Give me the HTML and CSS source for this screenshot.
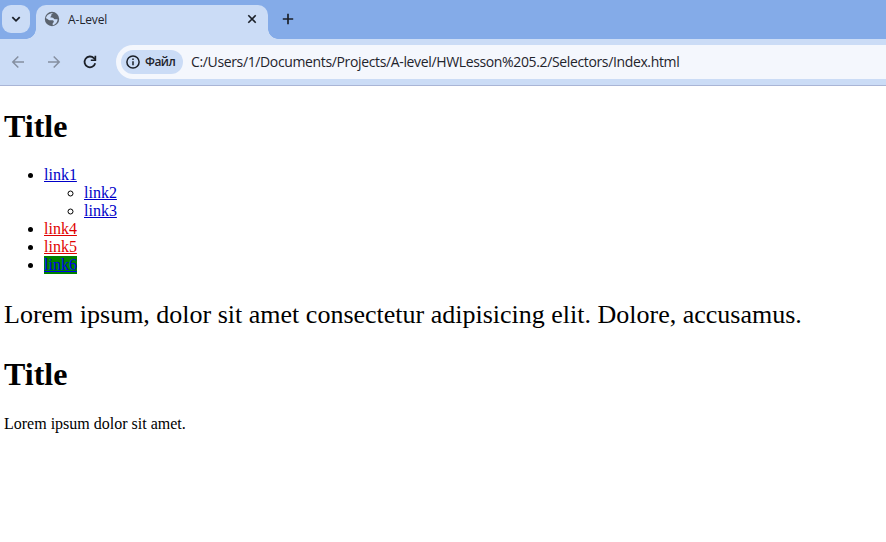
FILE: index.html
```html
<!DOCTYPE html>
<html lang="en">
<head>
<meta charset="utf-8">
<title>A-Level</title>
<link rel="stylesheet" href="styles.css">
</head>
<body>
<header class="browser">
  <div class="tabstrip">
    <div class="tab-search">
      <svg width="12" height="12" viewBox="0 0 12 12"><path d="M2.3 4.2 6 7.8 9.7 4.2" fill="none" stroke="#1b2028" stroke-width="1.8"/></svg>
    </div>
    <div class="tab">
      <svg class="globe" width="16" height="16" viewBox="0 0 16 16"><circle cx="8" cy="8" r="7.2" fill="#5b636e"/><path d="M9.4 2.2C7.6 3 7.1 3.4 7.3 4.4c.2.8-.9.8-.9 1.7 0 .8 1.3.5 2.3.7 1.2.3.9 1.5 2 1.5h2.9c0 3-2.2 5.4-4.9 5.9v-1.7c0-1 1.1-.8 1.1-1.8 0-1.2-.8-1.5-2-1.5H5.6C4.3 9.2 3.5 7.5 2 7.2 2.3 4.4 5.2 1.8 9.4 2.2Z" fill="#cbdcf6"/></svg>
      <span class="tab-title">A-Level</span>
      <svg class="close" width="10" height="10" viewBox="0 0 10 10"><path d="m1.3 1.3 7.4 7.4m0-7.4L1.3 8.7" stroke="#1b2028" stroke-width="1.6"/></svg>
    </div>
    <svg class="new-tab" width="12" height="12" viewBox="0 0 12 12"><path d="M6 .8v10.4M.8 6h10.4" stroke="#1b2028" stroke-width="1.7"/></svg>
  </div>
  <div class="toolbar">
    <svg class="nav" width="14" height="14" viewBox="0 0 14 14"><path d="M13 7H2m5.3-5.5L1.8 7l5.5 5.5" fill="none" stroke="#858fa0" stroke-width="1.5"/></svg>
    <svg class="nav" width="14" height="14" viewBox="0 0 14 14"><path d="M1 7h11M6.7 1.5 12.2 7l-5.5 5.5" fill="none" stroke="#858fa0" stroke-width="1.5"/></svg>
    <svg class="nav" width="14" height="14" viewBox="0 0 14 14"><path d="M12.2 8.2A5.4 5.4 0 1 1 10.9 3.2L12 4.4" fill="none" stroke="#1b2028" stroke-width="1.8"/><path d="M13.2.7v5.4H7.8V4.4h3.7V.7Z" fill="#1b2028"/></svg>
    <div class="omnibox">
      <div class="chip">
        <svg width="14" height="14" viewBox="0 0 14 14"><circle cx="7" cy="7" r="6.1" fill="none" stroke="#1b2028" stroke-width="1.5"/><path d="M7 6.2v4.1M7 3.6v1.5" stroke="#1b2028" stroke-width="1.5"/></svg>
        <span class="chip-label">Файл</span>
      </div>
      <span class="url">C:/Users/1/Documents/Projects/A-level/HWLesson%205.2/Selectors/Index.html</span>
    </div>
  </div>
</header>
<main>
  <h1>Title</h1>
  <ul>
    <li><a href="#">link1</a>
      <ul>
        <li><a href="#">link2</a></li>
        <li><a href="#">link3</a></li>
      </ul>
    </li>
    <li><a class="red" href="#">link4</a></li>
    <li><a class="red" href="#">link5</a></li>
    <li><a class="green" href="#">link6</a></li>
  </ul>
  <p class="lead">Lorem ipsum, dolor sit amet consectetur adipisicing elit. Dolore, accusamus.</p>
  <h1>Title</h1>
  <p>Lorem ipsum dolor sit amet.</p>
</main>
</body>
</html>
```
FILE: styles.css
```css
body {
  margin: 0;
  background: #fff;
  color: #000;
  font-family: "Liberation Serif", serif;
  font-size: 16px;
  overflow: hidden;
}
svg { display: block; flex: none; }
.browser {
  height: 85px;
  border-bottom: 1px solid #a9b5d6;
  background: #cbdcf6;
  font-family: "Open Sans", "Noto Sans", sans-serif;
  color: #1f242c;
}
.tabstrip {
  display: flex;
  align-items: flex-start;
  box-sizing: border-box;
  height: 39px;
  padding: 5px 0 0 2px;
  background: #84abe8;
}
.tab-search {
  display: flex;
  align-items: center;
  justify-content: center;
  width: 28px;
  height: 28px;
  border-radius: 9px;
  background: #cbdcf6;
}
.tab {
  position: relative;
  display: flex;
  align-items: center;
  box-sizing: border-box;
  width: 232px;
  height: 34px;
  margin-left: 6px;
  padding: 0 11px 6px 8px;
  border-radius: 10px 10px 0 0;
  background: #cbdcf6;
}
.tab::before, .tab::after {
  content: "";
  position: absolute;
  bottom: 0;
  width: 10px;
  height: 10px;
}
.tab::before {
  left: -10px;
  background: radial-gradient(circle at 0 0, transparent 9.5px, #cbdcf6 10px);
}
.tab::after {
  right: -10px;
  background: radial-gradient(circle at 100% 0, transparent 9.5px, #cbdcf6 10px);
}
.tab-title {
  flex: 1;
  margin-left: 8px;
  padding-top: 1px;
  font-size: 12px;
  line-height: 16px;
  letter-spacing: -0.15px;
}
.new-tab { margin: 8px 0 0 14px; }
.toolbar {
  display: flex;
  align-items: center;
  height: 46px;
  padding-left: 11px;
}
.nav { margin-right: 22px; }
.omnibox {
  display: flex;
  flex: 1;
  align-items: center;
  box-sizing: border-box;
  height: 34px;
  margin-left: -3px;
  padding-left: 5px;
  border-radius: 17px 0 0 17px;
  background: #f4f7fd;
}
.chip {
  display: flex;
  align-items: center;
  box-sizing: border-box;
  width: 62px;
  height: 24px;
  padding-left: 5px;
  border-radius: 12px;
  background: #cbdcf6;
}
.chip-label {
  margin-left: 5px;
  font-size: 12px;
  font-weight: 600;
  line-height: 16px;
  letter-spacing: -0.55px;
}
.url {
  margin-left: 8px;
  font-size: 14px;
  line-height: 20px;
  white-space: nowrap;
  letter-spacing: -0.36px;
}
main { padding: 0 4px; display: flow-root; }
h1 { margin: 21.44px 0; font-size: 32px; line-height: 37px; }
main > h1:first-child { margin-top: 22px; }
ul { margin: 16px 0; padding-left: 40px; line-height: 18px; }
ul ul { margin: 0; }
a { color: #0000c8; text-decoration: underline; }
.red { color: #e00000; }
.green { padding-bottom: 1px; color: #0000ee; background: #008000; }
p { margin: 16px 0; line-height: 18px; }
.lead {
  margin: 26px 0;
  font-size: 26px;
  line-height: 30px;
  white-space: nowrap;
}
```
